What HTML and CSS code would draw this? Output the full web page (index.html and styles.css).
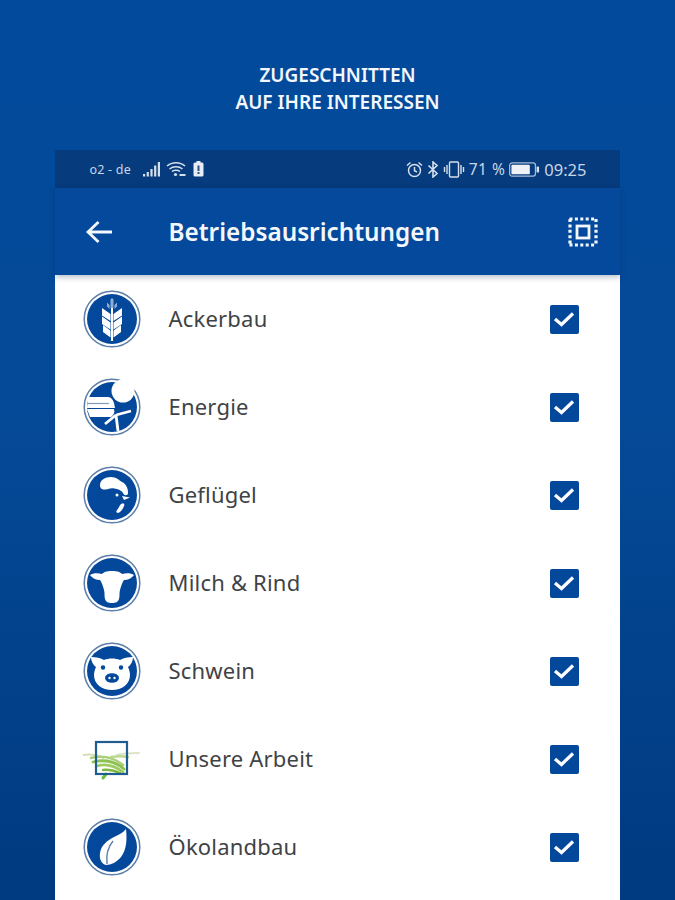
FILE: index.html
```html
<!DOCTYPE html>
<html lang="de">
<head>
  <meta charset="UTF-8" />
  <title>Betriebsausrichtungen</title>
  <link rel="stylesheet" href="styles.css">
</head>
<body>
  <h1 class="headline">ZUGESCHNITTEN<br>AUF IHRE INTERESSEN</h1>

  <div class="phone">
    <!-- Statusleiste -->
    <div class="statusbar">
      <div class="status-left">
        <span class="carrier">o2 - de</span>
        <svg class="st-icon" width="18" height="16" viewBox="0 0 18 16"><g fill="#d5e0ee"><rect x="0" y="13" width="2.200" height="2.500"/><rect x="3.700" y="11" width="2.200" height="4.500"/><rect x="7.400" y="8" width="2.200" height="7.500"/><rect x="11.100" y="4.500" width="2.200" height="11"/><rect x="14.800" y="1" width="2.200" height="14.500"/></g></svg>
        <svg class="st-icon" width="20" height="16" viewBox="0 0 20 16"><g fill="none" stroke="#d5e0ee" stroke-width="1.500"><path d="M1 5c5-4.500 13-4.500 18 0"/><path d="M3.500 8c3.500-3 9.500-3 13 0"/><path d="M6 10.500c2-1.600 6-1.600 8 0"/></g><circle cx="9.500" cy="13.500" r="1.600" fill="#d5e0ee"/><rect x="13.500" y="13" width="6" height="2" fill="#d5e0ee"/></svg>
        <svg class="st-icon batt-small" width="11" height="16" viewBox="0 0 11 16"><rect x="3.500" y="0" width="4" height="2" fill="#e6edf5"/><rect x="0.500" y="1.500" width="10" height="14" rx="1.500" fill="#e6edf5"/><rect x="4.500" y="4.500" width="2" height="5.500" fill="#30517f"/><rect x="4.500" y="11" width="2" height="2" fill="#30517f"/></svg>
      </div>
      <div class="status-right">
        <svg class="st-icon" width="17" height="17" viewBox="0 0 17 17"><g fill="none" stroke="#d5e0ee" stroke-width="1.500"><circle cx="8.500" cy="9.500" r="6"/><path d="M8.500 6v3.700l2.500 1.300"/><path d="M1 4.500 4.500 1.500M16 4.500l-3.500-3"/></g></svg>
        <svg class="st-icon" width="12" height="17" viewBox="0 0 11 17"><path d="M1 4.500l8.500 8L5.500 16V1l4 3.500L1 12.500" fill="none" stroke="#d5e0ee" stroke-width="1.600"/></svg>
        <svg class="st-icon" width="22" height="17" viewBox="0 0 21 17"><g fill="none" stroke="#d5e0ee" stroke-width="1.400"><rect x="6" y="1" width="9" height="15" rx="1"/><path d="M3.500 4v9M1 6v5M17.500 4v9M20 6v5"/></g></svg>
        <span class="pct">71 %</span>
        <svg class="st-icon" width="31" height="15" viewBox="0 0 32 15"><rect x="0.700" y="0.700" width="26.600" height="13.600" rx="2.500" fill="none" stroke="#a9bdd6" stroke-width="1.300"/><rect x="2.500" y="2.500" width="19" height="10" rx="1" fill="#eef2f7"/><rect x="28.500" y="4.500" width="2.500" height="6" fill="#d5e0ee"/></svg>
        <span class="clock">09:25</span>
      </div>
    </div>

    <!-- Kopfzeile -->
    <div class="appbar">
      <svg class="back" width="28" height="24" viewBox="0 0 28 24"><path d="M27 12H3.500M13.500 2 3 12 13.500 22" fill="none" stroke="#f4f7fb" stroke-width="2.800"/></svg>
      <span class="appbar-title">Betriebsausrichtungen</span>
      <svg class="select-all" width="30" height="30" viewBox="0 0 30 30">
        <rect x="9" y="9" width="12" height="12" fill="none" stroke="#f4f7fb" stroke-width="2.800"/>
        <path d="M1.500 2h27M1.500 28h27M2 2v26M28 2v26" fill="none" stroke="#f4f7fb" stroke-width="3.200" stroke-dasharray="3 2.400"/>
      </svg>
    </div>

    <!-- Liste -->
    <ul class="topics">
      <li class="topic">
        <svg class="topic-icon" viewBox="0 0 58 58">
          <circle cx="29" cy="29" r="27.800" fill="none" stroke="#5d7fa8" stroke-width="1.500"/><circle cx="29" cy="29" r="25" class="disc"/>
          <path d="M27.500 9.500 29 8l1.500 1.500V18h-3zM24 12.500l2.500 2.500v4l-2.500-2.500zM34 12.500 31.500 15v4l2.500-2.500z" fill="#8faed2"/>
          <g fill="#fff">
            <rect x="28" y="18" width="2" height="33"/>
            <path d="M19 18l8.500 6v7L19 25.500zM39 18l-8.500 6v7L39 25.500z"/>
            <path d="M19 26.500l8.500 6v7L19 34zM39 26.500l-8.500 6v7L39 34z"/>
            <path d="M20 35l7.500 5.500v7L20 42zM38 35l-7.500 5.500v7L38 42z"/>
          </g>
        </svg>
        <span class="topic-name">Ackerbau</span>
        <span class="check"><svg width="22" height="16" viewBox="0 0 22 16"><path d="M2 8 8.500 13.500 20 2.500" fill="none" stroke="#fff" stroke-width="3.200"/></svg></span>
      </li>
      <li class="topic">
        <svg class="topic-icon" viewBox="0 0 58 58">
          <circle cx="29" cy="29" r="27.800" fill="none" stroke="#5d7fa8" stroke-width="1.500"/><circle cx="29" cy="29" r="25" class="disc"/>
          <circle cx="40" cy="13" r="11.500" fill="#fff"/>
          <path d="M5 19h20c3 0 5 3 6 6l1 5H4zM4 31h27c1 3 0 6-3 8H7z" fill="#fff"/>
          <path d="M4 25.500h22" stroke="#7f9cc0" stroke-width="1.200"/>
          <path d="M33 37 48 33M33 37 22 46M33 37 35 53" stroke="#fff" stroke-width="2.800" fill="none"/>
        </svg>
        <span class="topic-name">Energie</span>
        <span class="check"><svg width="22" height="16" viewBox="0 0 22 16"><path d="M2 8 8.500 13.500 20 2.500" fill="none" stroke="#fff" stroke-width="3.200"/></svg></span>
      </li>
      <li class="topic">
        <svg class="topic-icon" viewBox="0 0 58 58">
          <circle cx="29" cy="29" r="27.800" fill="none" stroke="#5d7fa8" stroke-width="1.500"/><circle cx="29" cy="29" r="25" class="disc"/>
          <path d="M17 19c0-5 5-8 11-8 5 0 8 3 11 5 4 2 6 6 6 11 0 3-4 3-5 0-1-2-3-3-6-4-4-1-6-1-9 0-4 1-8 1-8-4z" fill="#fff"/>
          <circle cx="34" cy="29" r="1.500" fill="#fff"/>
          <path d="M39 30 47 31.500 41 34z" fill="#fff"/>
          <path d="M38 38c3-1 4 0 3 2-1 3-3 6-6 7-2 0-2-2-1-3 2-2 2-4 4-6z" fill="#fff"/>
        </svg>
        <span class="topic-name">Geflügel</span>
        <span class="check"><svg width="22" height="16" viewBox="0 0 22 16"><path d="M2 8 8.500 13.500 20 2.500" fill="none" stroke="#fff" stroke-width="3.200"/></svg></span>
      </li>
      <li class="topic">
        <svg class="topic-icon" viewBox="0 0 58 58">
          <circle cx="29" cy="29" r="27.800" fill="none" stroke="#5d7fa8" stroke-width="1.500"/><circle cx="29" cy="29" r="25" class="disc"/>
          <path d="M7 21c3-2 8-2 12-1 2-2 4-3 10-3s8 1 10 3c4-1 9-1 12 1-2 3-6 5-10 5-2 3-3 6-4 10-1 3 0 6-1 9-1 3-3 4-7 4s-6-1-7-4c-1-3 0-6-1-9-1-4-2-7-4-10-4 0-8-2-10-5z" fill="#fff"/>
        </svg>
        <span class="topic-name">Milch &amp; Rind</span>
        <span class="check"><svg width="22" height="16" viewBox="0 0 22 16"><path d="M2 8 8.500 13.500 20 2.500" fill="none" stroke="#fff" stroke-width="3.200"/></svg></span>
      </li>
      <li class="topic">
        <svg class="topic-icon" viewBox="0 0 58 58">
          <circle cx="29" cy="29" r="27.800" fill="none" stroke="#5d7fa8" stroke-width="1.500"/><circle cx="29" cy="29" r="25" class="disc"/>
          <path d="M8 15c5 0 10 1 13 3 5-2 11-2 16 0 3-2 8-3 13-3 0 4-2 8-5 10 1 2 2 5 2 8 0 9-8 15-18 15s-18-6-18-15c0-3 1-6 2-8-3-2-5-6-5-10z" fill="#fff"/>
          <circle cx="20" cy="25.500" r="2.200" class="disc"/><circle cx="38" cy="25.500" r="2.200" class="disc"/>
          <ellipse cx="29" cy="36" rx="7" ry="4.800" class="disc"/>
          <circle cx="26.500" cy="36" r="1.200" fill="#fff"/><circle cx="31.500" cy="36" r="1.200" fill="#fff"/>
        </svg>
        <span class="topic-name">Schwein</span>
        <span class="check"><svg width="22" height="16" viewBox="0 0 22 16"><path d="M2 8 8.500 13.500 20 2.500" fill="none" stroke="#fff" stroke-width="3.200"/></svg></span>
      </li>
      <li class="topic">
        <svg class="topic-icon" viewBox="0 0 58 58">
          <g fill="none" stroke-linecap="round">
            <path d="M0 25c8-1 15 0 20 3" stroke="#d4dcb8" stroke-width="2"/>
            <path d="M8 28c12-3 22-1 32 7" stroke="#a9cf7a" stroke-width="2.600"/>
            <path d="M10 32c12-3 22-1 31 7" stroke="#8cc152" stroke-width="2.800"/>
            <path d="M14 36c10-3 18 0 26 6" stroke="#9ccb5f" stroke-width="2.800"/>
            <path d="M20 40c7-1 12 1 17 3" stroke="#7cb83e" stroke-width="2.400"/>
            <path d="M34 25c7-2 14-2 22-2" stroke="#dbe4c8" stroke-width="2"/>
            <path d="M28 27c6-1 12-1 17 0" stroke="#bcd98f" stroke-width="2.400"/>
            <path d="M20 48l3-4" stroke="#6cbb3c" stroke-width="3"/>
          </g>
          <rect x="13" y="12" width="31" height="32" fill="none" stroke="#1f5c8f" stroke-width="2.200"/>
        </svg>
        <span class="topic-name">Unsere Arbeit</span>
        <span class="check"><svg width="22" height="16" viewBox="0 0 22 16"><path d="M2 8 8.500 13.500 20 2.500" fill="none" stroke="#fff" stroke-width="3.200"/></svg></span>
      </li>
      <li class="topic">
        <svg class="topic-icon" viewBox="0 0 58 58">
          <circle cx="29" cy="29" r="27.800" fill="none" stroke="#5d7fa8" stroke-width="1.500"/><circle cx="29" cy="29" r="25" class="disc"/>
          <path d="M43 11c1 10 1 20-5 28-4 5-10 8-15 8-4-1-7-5-6-12 1-8 8-13 14-16 4-2 9-4 12-8z" fill="#fff"/>
          <path d="M30 23c-5 6-7 14-6 23" fill="none" stroke="#5d7fa8" stroke-width="1.400"/>
        </svg>
        <span class="topic-name">Ökolandbau</span>
        <span class="check"><svg width="22" height="16" viewBox="0 0 22 16"><path d="M2 8 8.500 13.500 20 2.500" fill="none" stroke="#fff" stroke-width="3.200"/></svg></span>
      </li>
    </ul>
  </div>
</body>
</html>
```

FILE: styles.css
```css
html, body {
  height: 100%;
}

body {
  margin: 0;
  height: 900px;
  overflow: hidden;
  display: flex;
  flex-direction: column;
  align-items: center;
  font-family: "Noto Sans", "Open Sans", sans-serif;
  background: linear-gradient(180deg, #024a9c 0%, #054a98 45%, #003a80 100%);
}

.headline {
  margin: 0;
  padding-top: 62px;
  height: 88px;
  text-align: center;
  font-size: 19px;
  line-height: 27px;
  font-weight: 600;
  color: #f4f7fb;
}

.phone {
  width: 565px;
  flex: 1;
  display: flex;
  flex-direction: column;
  margin-left: -1px;
}

/* Statusleiste */
.statusbar {
  height: 38px;
  flex: none;
  background: #063b7d;
  display: flex;
  align-items: center;
  justify-content: space-between;
  padding: 0 33px 0 35px;
  color: #c9d6e6;
  font-size: 15px;
}

.status-left, .status-right {
  display: flex;
  align-items: center;
  gap: 5px;
}

.status-right {
  gap: 4px;
}

.carrier {
  font-size: 12.500px;
  letter-spacing: 0.200px;
  margin-right: 7px;
}

.batt-small {
  margin-left: 2px;
}

.pct {
  font-size: 15.500px;
  letter-spacing: 0.500px;
}

.clock {
  font-size: 16.500px;
}

/* Kopfzeile */
.appbar {
  height: 87px;
  flex: none;
  background: #04499c;
  display: flex;
  align-items: center;
  padding: 0 22px 0 30px;
  box-shadow: 0 2px 6px rgba(0, 30, 80, 0.3);
  position: relative;
}

.appbar-title {
  margin-left: 56px;
  flex: 1;
  font-size: 24.300px;
  font-weight: 600;
  color: #f4f7fb;
}

/* Liste */
.topics {
  list-style: none;
  margin: 0;
  padding: 0;
  flex: 1;
  background: #fff;
}

.topic {
  height: 88px;
  display: flex;
  align-items: center;
  padding: 0 41px 0 28px;
}

.topic-icon {
  width: 58px;
  height: 58px;
  flex: none;
}

.disc {
  fill: #04489b;
}

.topic-name {
  flex: 1;
  margin-left: 28px;
  padding-bottom: 2px;
  font-size: 22px;
  letter-spacing: 0.200px;
  color: #3f4346;
}

.check {
  width: 29px;
  height: 29px;
  border-radius: 2px;
  background: #04489b;
  display: flex;
  align-items: center;
  justify-content: center;
}
```
